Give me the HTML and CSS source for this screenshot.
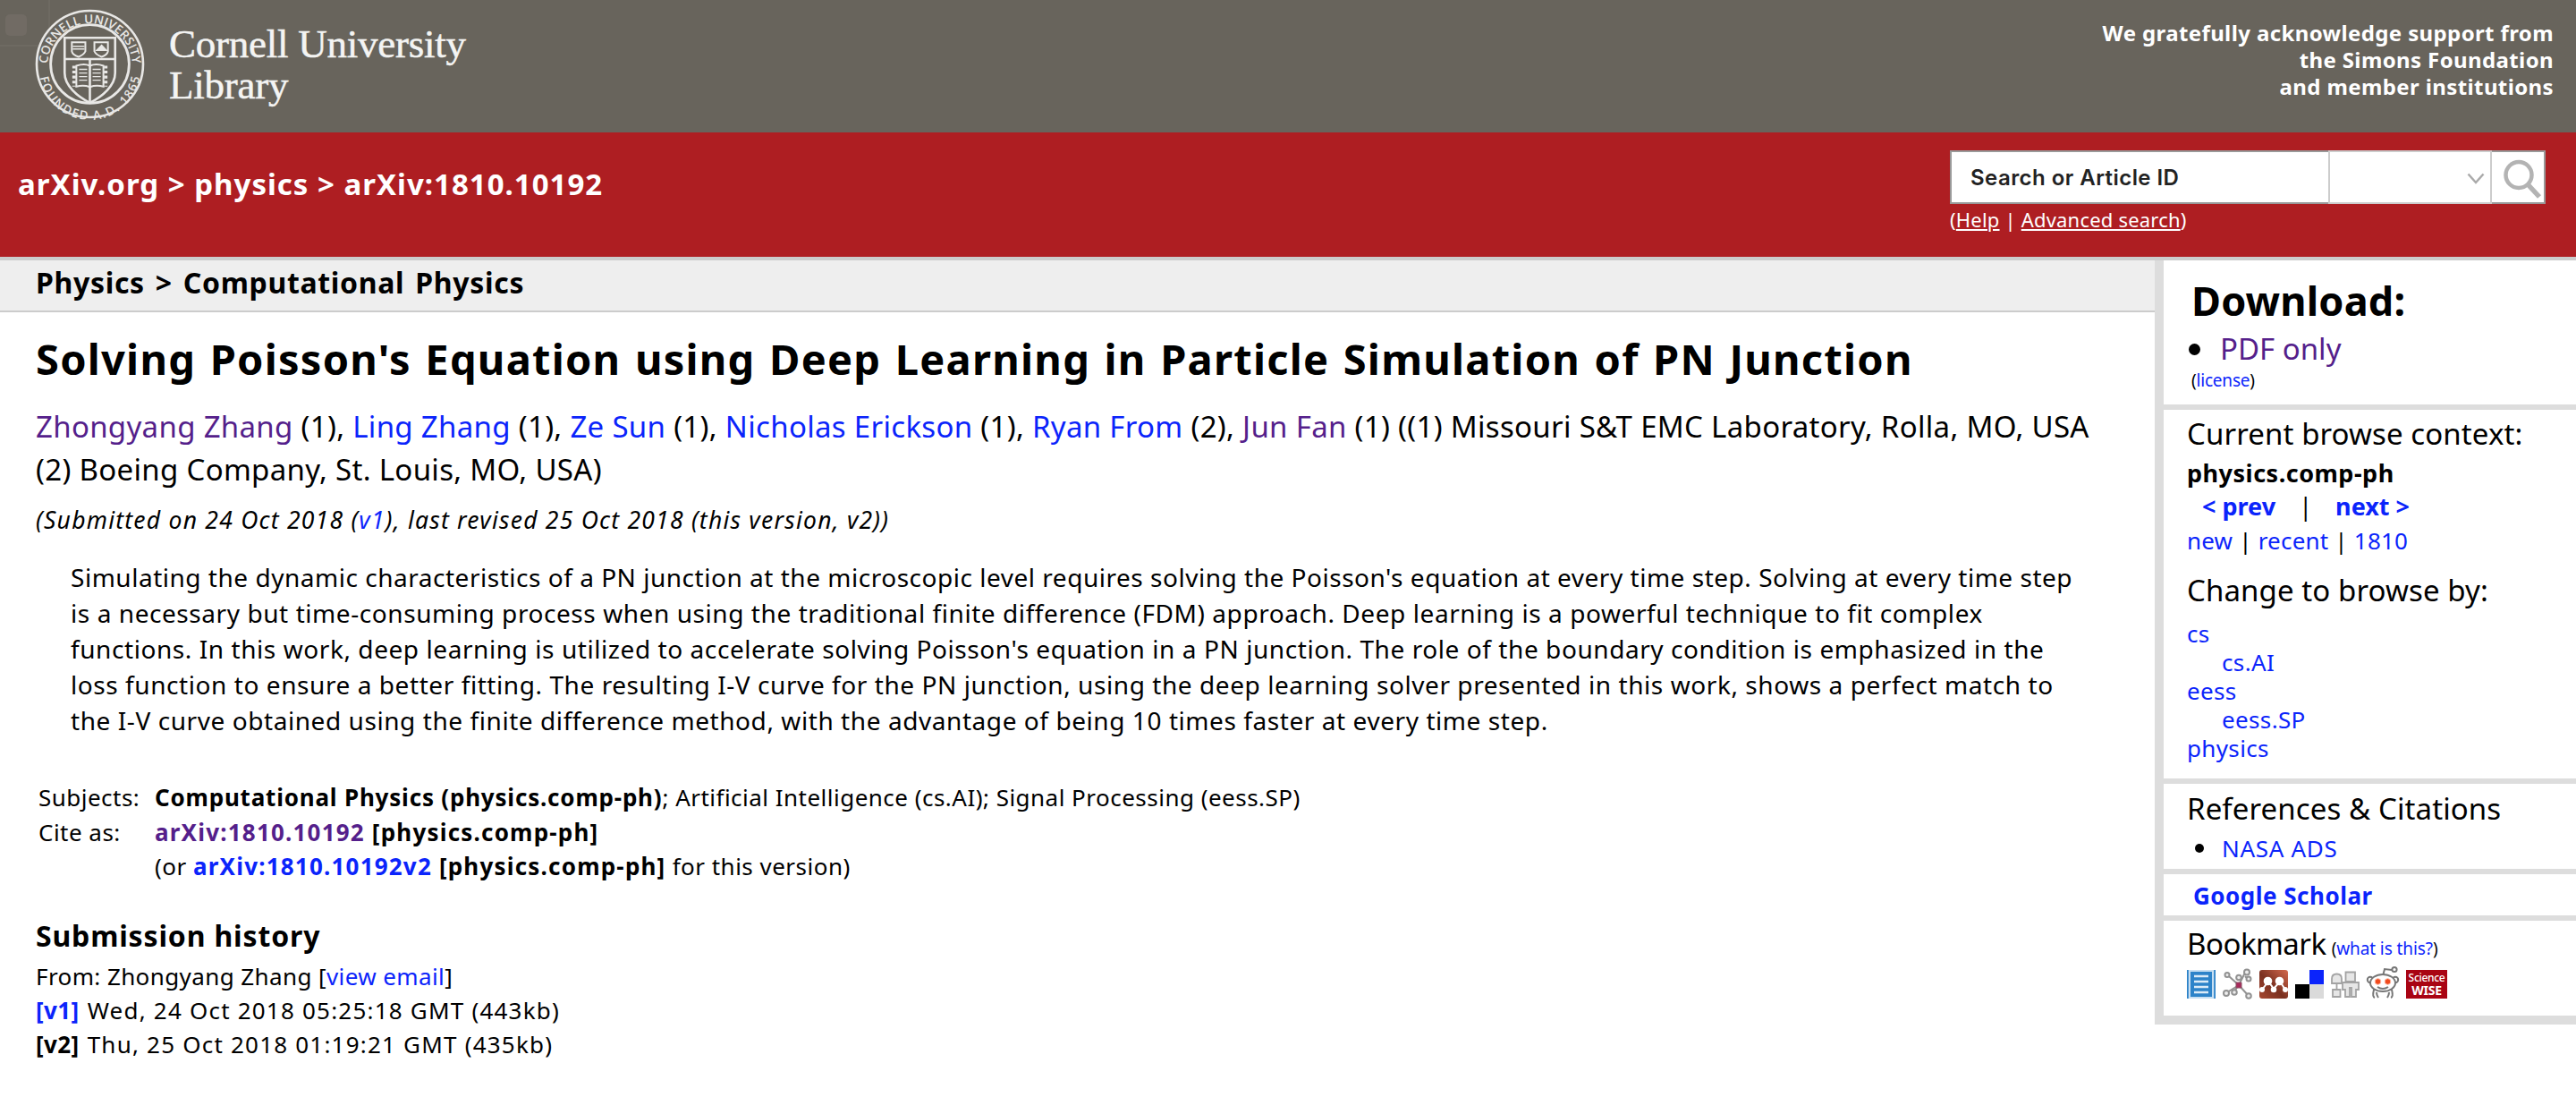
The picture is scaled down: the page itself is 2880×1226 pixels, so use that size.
FILE: index.html
```html
<!DOCTYPE html>
<html lang="en">
<head>
<meta charset="utf-8">
<title>[1810.10192] Solving Poisson's Equation using Deep Learning in Particle Simulation of PN Junction</title>
<link rel="stylesheet" href="styles.css">
</head>
<body>
<header class="cornell">
  <span class="corner"></span>
  <svg class="seal" viewBox="0 0 120 120" fill="none" stroke="#e8e7e5">
    <circle cx="60" cy="60" r="59" stroke-width="2.6"/>
    <circle cx="60" cy="60" r="43.500" stroke-width="2.8"/>
    <path id="arc-top" d="M13 62A47 47 0 0 1 107 62" stroke="none"/>
    <path id="arc-bottom" d="M4 66A56 56 0 0 0 116 66" stroke="none"/>
    <text class="seal-text"><textPath href="#arc-top" startOffset="50%" text-anchor="middle" textLength="143">CORNELL UNIVERSITY</textPath></text>
    <text class="seal-text"><textPath href="#arc-bottom" startOffset="50%" text-anchor="middle" textLength="158">FOUNDED A.D. 1865</textPath></text>
    <path d="M32 31H88V70C88 84 74 96 60 103C46 96 32 84 32 70Z" stroke-width="2.6"/>
    <path d="M32 54.500H88M60 54.500V102" stroke-width="2.6"/>
    <path d="M40 36H55V46Q53 50 47.500 52Q41 50 40 46ZM65 36H80V46Q79 50 73 52Q67 50 65 46Z" stroke-width="2"/>
    <path d="M41 40.500H54M41 43.500H54" stroke-width="1.500"/>
    <path d="M67 45L73 39L79 45Z" fill="#e8e7e5" stroke-width="1"/>
    <path d="M45 62Q54 59 60 62Q67 59 75 62V85Q67 83 60 85.500Q53 83 45 85Z" stroke-width="2"/>
    <path d="M48 66H57M48 70H57M48 74H57M48 78H57M63 66H72M63 70H72M63 74H72M63 78H72" stroke-width="1.400"/>
    <path d="M42.500 62V85M77.500 62V85" stroke-width="4" stroke-dasharray="3 2.500"/>
  </svg>
  <div class="wordmark">Cornell University<br>Library</div>
  <div class="support">We gratefully acknowledge support from<br>the Simons Foundation<br>and member institutions</div>
</header>

<div class="banner">
  <div class="crumbs">arXiv.org &gt; physics &gt; arXiv:1810.10192</div>
  <form class="search">
    <div class="search-row">
      <div class="search-input">Search or Article ID</div>
      <div class="search-select">
        <svg width="20" height="14" viewBox="0 0 20 14" fill="none" stroke="#aaa" stroke-width="2.500"><path d="M1.500 1.500L10 11L18.500 1.500"/></svg>
      </div>
      <div class="search-button">
        <svg width="44" height="44" viewBox="0 0 44 44" fill="none" stroke="#b3b3b3"><circle cx="18" cy="17.500" r="14.500" stroke-width="4.500"/><path d="M28.500 28.500L41 42" stroke-width="5.500"/></svg>
      </div>
    </div>
    <div class="search-help">(<a>Help</a> | <a>Advanced search</a>)</div>
  </form>
</div>

<div class="page">
  <main>
    <div class="subheader">Physics &gt; Computational Physics</div>
    <article>
      <h1>Solving Poisson's Equation using Deep Learning in Particle Simulation of PN Junction</h1>
      <div class="authors"><a class="visited">Zhongyang Zhang</a> (1), <a>Ling Zhang</a> (1), <a>Ze Sun</a> (1), <a>Nicholas Erickson</a> (1), <a>Ryan From</a> (2), <a class="visited">Jun Fan</a> (1) ((1) Missouri S&amp;T EMC Laboratory, Rolla, MO, USA<br>(2) Boeing Company, St. Louis, MO, USA)</div>
      <div class="dateline">(Submitted on 24 Oct 2018 (<a>v1</a>), last revised 25 Oct 2018 (this version, v2))</div>
      <p class="abstract"><span class="lead">Simulating the dynamic characteristics of a PN junction at the microscopic level requires solving the Poisson's equation at every time step. Solving at every time step</span><br>is a necessary but time-consuming process when using the traditional finite difference (FDM) approach. Deep learning is a powerful technique to fit complex<br>functions. In this work, deep learning is utilized to accelerate solving Poisson's equation in a PN junction. The role of the boundary condition is emphasized in the<br>loss function to ensure a better fitting. The resulting I-V curve for the PN junction, using the deep learning solver presented in this work, shows a perfect match to<br>the I-V curve obtained using the finite difference method, with the advantage of being 10 times faster at every time step.</p>
      <div class="meta">
        <div>Subjects:</div><div><b>Computational Physics (physics.comp-ph)</b>; Artificial Intelligence (cs.AI); Signal Processing (eess.SP)</div>
        <div>Cite as:</div><div><b class="id"><a class="visited">arXiv:1810.10192</a> [physics.comp-ph]</b></div>
        <div></div><div>(or <b class="id"><a>arXiv:1810.10192v2</a> [physics.comp-ph]</b> for this version)</div>
      </div>
      <h2>Submission history</h2>
      <div class="history">
        <div>From: Zhongyang Zhang [<a>view email</a>]</div>
        <div><a><b>[v1]</b></a> <span class="stamp">Wed, 24 Oct 2018 05:25:18 GMT (443kb)</span></div>
        <div><b>[v2]</b> <span class="stamp">Thu, 25 Oct 2018 01:19:21 GMT (435kb)</span></div>
      </div>
    </article>
  </main>

  <aside>
    <section class="download">
      <h3>Download:</h3>
      <div class="bullet"><a class="visited">PDF only</a></div>
      <div class="license">(<a>license</a>)</div>
    </section>
    <section class="browse">
      <h4>Current browse context:</h4>
      <div class="context">physics.comp-ph</div>
      <div class="prevnext"><a>&lt; prev</a><span>|</span><a>next &gt;</a></div>
      <div class="recent"><a>new</a> | <a>recent</a> | <a>1810</a></div>
      <h4>Change to browse by:</h4>
      <div class="subjects">
        <a>cs</a>
        <a class="sub">cs.AI</a>
        <a>eess</a>
        <a class="sub">eess.SP</a>
        <a>physics</a>
      </div>
    </section>
    <section class="refs">
      <h4>References &amp; Citations</h4>
      <div class="bullet"><a>NASA ADS</a></div>
    </section>
    <section class="scholar"><a>Google Scholar</a></section>
    <section class="bookmark">
      <h4>Bookmark<small>(<a>what is this?</a>)</small></h4>
      <div class="icons">
        <svg width="32" height="32" viewBox="0 0 32 32"><path d="M0 0H32V32H0Z" fill="#c8dff2"/><path d="M0 0H1.800V32H0ZM30.200 0H32V32H30.200ZM4 2H28V30H4Z" fill="#2d83c9"/><path d="M8 7H24M8 13H24M8 19H24M8 25H24" stroke="#dcebf7" stroke-width="2.500"/></svg>
        <svg width="32" height="32" viewBox="0 0 32 32" fill="none" stroke="#929292" stroke-width="2"><path d="M7 7L18 17L29 29M18 17L25 3M18 17L12 25M18 17L5 25M25 7L30 12"/><g fill="#eee"><circle cx="5" cy="5.500" r="2.500"/><circle cx="18" cy="8.500" r="2.800"/><circle cx="27" cy="2.500" r="3"/><circle cx="29" cy="10" r="2.500"/><circle cx="4" cy="26" r="3"/><circle cx="13" cy="25" r="2.800"/><circle cx="29" cy="29" r="2.800"/></g><path d="M15 14H21V20H15Z" fill="#a72a5b" stroke="#8b5267" stroke-width="1"/></svg>
        <svg class="mendeley" width="32" height="32" viewBox="0 0 32 32"><defs><linearGradient id="mendeley" x1="0" y1="1" x2="1" y2="0"><stop offset="0" stop-color="#a84830"/><stop offset=".45" stop-color="#7a3020"/><stop offset="1" stop-color="#d4694d"/></linearGradient></defs><rect width="32" height="32" rx="3" fill="url(#mendeley)"/><path d="M3 22L10 13L16 21L23 13L29 22" fill="none" stroke="#fff" stroke-width="2"/><g fill="#fff"><circle cx="9.500" cy="12.500" r="4.800"/><circle cx="22.500" cy="12.500" r="4.800"/><circle cx="3" cy="22" r="3"/><circle cx="16" cy="22" r="3.300"/><circle cx="29" cy="22" r="3"/></g></svg>
        <svg width="32" height="32" viewBox="0 0 32 32"><path d="M0 0H16V16H0Z" fill="#fff"/><path d="M16 0H32V16H16Z" fill="#0b24fb"/><path d="M0 16H16V32H0Z"/><path d="M16 16H32V32H16Z" fill="#dadada"/></svg>
        <svg width="32" height="32" viewBox="0 0 32 32" fill="#e6e6e6" stroke="#a3a3a3" stroke-width="1.800"><path d="M6.500 15V22"/><path d="M1 15V10Q1 4.500 6.500 4.500T12 10V15Z"/><path d="M2 22H10.500V30H2Z"/><path d="M13 14H31V22H28V30H23V20H21V30H16V22H13Z"/><path d="M16.500 2.500H27V13H16.500Z"/></svg>
        <svg width="36" height="36" viewBox="0 0 36 36" fill="#fff" stroke="#777" stroke-width="2"><path d="M18 11L20 3L28 4" fill="none"/><circle cx="31" cy="3.500" r="2.600"/><circle cx="4" cy="15" r="3.200"/><circle cx="32" cy="15" r="3.200"/><path d="M9 35Q6 34 8 26H28Q30 34 27 35"/><path d="M13 35Q11 32 11 29M23 35Q25 32 25 29" fill="none"/><ellipse cx="18" cy="18.500" rx="14" ry="9.500"/><g fill="#f04a1d" stroke="#ffb9a5" stroke-width="1"><circle cx="12.500" cy="17" r="3.300"/><circle cx="23.500" cy="17" r="3.300"/></g><path d="M12 23Q18 27 24 23" fill="none"/></svg>
        <div class="sciencewise"><span>Science</span><b>WISE</b></div>
      </div>
    </section>
  </aside>
</div>
</body>
</html>
```
FILE: styles.css
```css
* { box-sizing: border-box; }

body {
  margin: 0;
  background: #fff;
  color: #000;
  font-family: "Noto Sans", "Open Sans", sans-serif;
  font-size: 26px;
  white-space: nowrap;
}

h1, h2, h3, h4, p { margin: 0; }
svg { display: block; flex: none; overflow: visible; }
a { color: #0b24fb; }
a.visited { color: #551f8b; }

/* Top bar */
.cornell {
  position: relative;
  display: flex;
  height: 148px;
  padding-left: 40px;
  background: #68645c;
  color: #fff;
}
.corner {
  position: absolute;
  left: 0;
  top: 0;
  width: 56px;
  height: 52px;
  border: solid #6e6a62;
  border-width: 0 2px 2px 0;
}
.corner::before {
  content: "";
  position: absolute;
  left: 6px;
  top: 16px;
  width: 24px;
  height: 24px;
  border-radius: 5px;
  background: #716b64;
}
.seal {
  position: relative;
  width: 121px;
  height: 121px;
  margin-top: 11px;
}
.seal-text {
  fill: #e8e7e5;
  stroke: none;
  font: 600 13.5px "Open Sans", sans-serif;
}
.wordmark {
  margin: 26px 0 0 28px;
  font: 45px/46px "Liberation Serif", serif;
  letter-spacing: -.25px;
  color: #f4f4f3;
  -webkit-text-stroke: .5px #f4f4f3;
}
.support {
  margin: 22px 25px 0 auto;
  text-align: right;
  font-size: 24px;
  font-weight: 700;
  line-height: 30px;
  letter-spacing: .38px;
}

/* Breadcrumb and search */
.banner {
  display: flex;
  justify-content: space-between;
  height: 143px;
  padding: 20px 34px 0 20px;
  border-bottom: 4px solid #ccc;
  background: #ae1e22;
  color: #fff;
}
.crumbs {
  padding-top: 18px;
  font-size: 33px;
  font-weight: 700;
  line-height: 40px;
  letter-spacing: 1px;
}
.search { width: 666px; }
.search-row { display: flex; height: 60px; background: #fff; color: #222; }
.search-input {
  width: 423px;
  padding-left: 21px;
  border: 2px solid #999;
  border-right: 0;
  font: 600 24px/58px Inter, sans-serif;
  letter-spacing: .45px;
}
.search-select {
  display: flex;
  align-items: center;
  justify-content: flex-end;
  width: 183px;
  padding: 3px 6px 0 0;
  border: 2px solid #ccc;
}
.search-button {
  width: 60px;
  padding: 8px 0 0 12px;
  border: 2px solid #999;
  border-left: 0;
}
.search-help { margin-top: 2px; font-size: 22px; line-height: 31px; letter-spacing: .2px; }
.search-help a { color: #fff; text-decoration: underline; text-underline-offset: 2px; text-decoration-thickness: 2px; }

/* Article */
.page { display: flex; align-items: flex-start; }
main { width: 2409px; }
.subheader {
  height: 58px;
  padding-left: 40px;
  border-bottom: 2px solid #ccc;
  background: #eee;
  font-size: 32px;
  font-weight: 700;
  line-height: 50px;
  letter-spacing: .67px;
  word-spacing: 3px;
}
article { padding: 24px 0 0 40px; }
h1 { font-size: 47px; line-height: 56px; letter-spacing: 1.25px; word-spacing: 2px; }
.authors { margin-top: 24px; font-size: 33px; line-height: 48px; letter-spacing: .31px; }
.dateline { margin-top: 16px; font-size: 26.5px; font-style: italic; line-height: 32px; letter-spacing: 1.24px; }
.abstract { margin: 28px 0 0 39px; font-size: 28px; line-height: 40px; letter-spacing: .57px; }
.lead { letter-spacing: .52px; }
.meta {
  display: grid;
  grid-template-columns: 130px auto;
  margin: 47px 0 0 3px;
  line-height: 38.5px;
  letter-spacing: .48px;
}
.meta b { letter-spacing: .8px; }
.meta .id { letter-spacing: 1.2px; }
h2 { margin-top: 37px; font-size: 32px; line-height: 42px; letter-spacing: .84px; }
.history { margin-top: 5px; line-height: 38.3px; letter-spacing: .4px; }
.stamp { margin-left: 2px; letter-spacing: 1.21px; }

/* Sidebar */
aside { width: 471px; border: solid #ddd; border-width: 0 0 10px 10px; }
section { padding-left: 26px; border-bottom: 6px solid #ddd; }
section:last-child { border-bottom: 0; }
h4 { font-size: 33px; font-weight: 400; line-height: 40px; letter-spacing: .1px; }
.bullet { display: flex; align-items: center; }
.bullet::before { content: ""; flex: none; border-radius: 50%; background: #000; }

.download { height: 167px; padding-top: 18px; }
.download h3 { padding-left: 5px; font-size: 45px; line-height: 54px; letter-spacing: .2px; }
.download .bullet { margin-top: 7px; padding-left: 2px; font-size: 33px; line-height: 40px; }
.download .bullet::before { width: 13px; height: 13px; margin-right: 22px; }
.license { margin-top: 2px; padding-left: 5px; font-size: 19px; line-height: 26px; letter-spacing: -.2px; }

.browse { height: 418px; padding-top: 7px; }
.context { margin-top: 6px; font-size: 27px; font-weight: 700; line-height: 36px; letter-spacing: .5px; }
.prevnext { display: flex; justify-content: space-between; width: 249px; padding-left: 17px; font-size: 27px; line-height: 38px; }
.prevnext a { font-weight: 700; }
.recent { font-size: 26px; line-height: 38px; letter-spacing: .2px; }
.browse h4 + .subjects { display: flex; flex-direction: column; margin-top: 12px; line-height: 32px; letter-spacing: .35px; }
.recent + h4 { margin-top: 17px; }
.sub { padding-left: 39px; }

.refs { height: 101px; padding-top: 8px; }
.refs .bullet { margin-top: 6px; padding-left: 9px; line-height: 36px; letter-spacing: .7px; }
.refs .bullet::before { width: 10px; height: 10px; margin-right: 20px; }

.scholar { height: 52px; padding: 7px 0 0 33px; font-weight: 700; line-height: 34px; letter-spacing: .5px; }

.bookmark { height: 106px; padding-top: 6px; }
.bookmark h4 { height: 40px; letter-spacing: -.5px; }
.bookmark small { margin-left: 6px; font-size: 19px; line-height: 20px; letter-spacing: -.1px; }
.icons { display: flex; align-items: flex-end; gap: 8px; height: 41px; }
.mendeley { margin-left: 1px; }
.sciencewise {
  display: flex;
  flex-direction: column;
  align-items: center;
  width: 46px;
  height: 32px;
  background: #a90413;
  color: #fff;
  font: 500 12px/15px "Noto Sans", sans-serif;
  letter-spacing: -.3px;
}
.sciencewise span { margin-top: 1px; }
.sciencewise b { font-size: 14px; line-height: 14px; }
```
